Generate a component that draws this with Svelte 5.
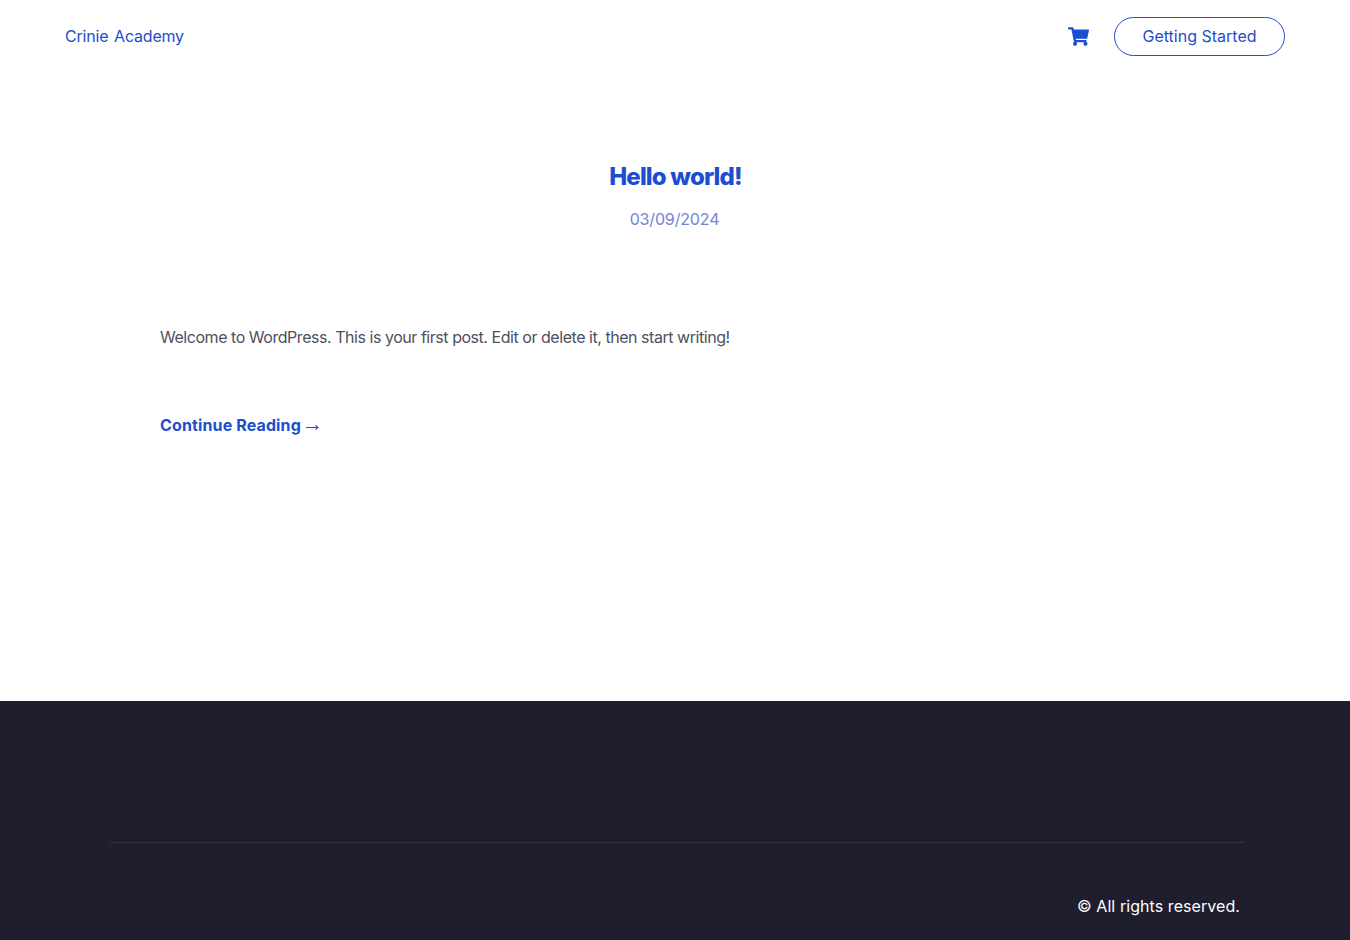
<script>
  let postDate = "03/09/2024";
</script>

<div class="page">
  <header class="header">
    <a class="brand" href="#top">Crinie Academy</a>
    <div class="actions">
      <a class="cart" href="#cart" aria-label="Cart">
        <svg viewBox="0 0 576 512" width="21" height="19" fill="currentColor">
          <path d="M528.12 301.32l47.27-208C578.81 78.3 567.39 64 552 64H159.21l-9.17-44.81C147.77 8.02 137.93 0 126.53 0H24C10.75 0 0 10.75 0 24v16c0 13.25 10.75 24 24 24h69.88l70.25 343.43C147.32 417.1 136 435.22 136 456c0 30.93 25.07 56 56 56s56-25.07 56-56c0-15.67-6.44-29.83-16.82-40h209.64C430.44 426.17 424 440.33 424 456c0 30.93 25.07 56 56 56s56-25.07 56-56c0-22.17-12.89-41.33-31.58-50.4l5.52-24.28c3.41-15.02-8-29.32-23.4-29.32H218.1l-6.55-32h293.16c11.2 0 20.91-7.75 23.41-18.68z" />
        </svg>
      </a>
      <a class="cta" href="#start">Getting Started</a>
    </div>
  </header>

  <main class="main">
    <div class="post-head">
      <h1>Hello world!</h1>
      <p class="date">{postDate}</p>
    </div>
    <p class="excerpt">Welcome to WordPress. This is your first post. Edit or delete it, then start writing!</p>
    <a class="more" href="#post">Continue Reading<span>→</span></a>
  </main>

  <footer class="footer">
    <div class="bottom">
      <p>© All rights reserved.</p>
    </div>
  </footer>
</div>

<style>
  :global(body) {
    margin: 0;
    background: #fff;
    font-family: Inter, "Liberation Sans", sans-serif;
  }
  .page {
    display: flex;
    flex-direction: column;
    height: 940px;
    overflow: hidden;
  }
  a {
    text-decoration: none;
    color: #1c4ecf;
  }
  .header {
    display: flex;
    justify-content: space-between;
    align-items: center;
    height: 39px;
    padding: 17px 65px 0;
    flex: none;
  }
  .brand {
    font-size: 16px;
    line-height: 24px;
    padding-bottom: 2px;
    letter-spacing: -0.2px;
    word-spacing: 1.5px;
  }
  .actions {
    display: flex;
    align-items: center;
    gap: 25px;
  }
  .cart {
    display: flex;
  }
  .cta {
    box-sizing: border-box;
    width: 171px;
    height: 39px;
    display: flex;
    align-items: center;
    justify-content: center;
    padding-bottom: 2px;
    border: 1px solid #1c4ecf;
    border-radius: 20px;
    font-size: 16px;
  }
  .main {
    flex: none;
    height: 645px;
    box-sizing: border-box;
    padding: 0 160px;
  }
  .post-head {
    text-align: center;
    padding-top: 105px;
  }
  h1 {
    margin: 0;
    padding-left: 1px;
    font-size: 24px;
    line-height: 32px;
    font-weight: 800;
    letter-spacing: -0.82px;
    color: #1c4ecf;
  }
  .date {
    margin: 14px 0 0;
    padding-right: 1px;
    font-size: 16px;
    line-height: 24px;
    letter-spacing: -0.15px;
    color: #7283d8;
  }
  .excerpt {
    margin: 94px 0 0;
    font-size: 16px;
    line-height: 24px;
    letter-spacing: -0.46px;
    color: #4f4f5f;
  }
  .more {
    display: inline-block;
    margin-top: 64px;
    font-size: 16px;
    line-height: 24px;
    font-weight: 700;
    letter-spacing: 0.13px;
  }
  .more span {
    margin-left: 1px;
    font-family: "Liberation Sans", sans-serif;
    font-size: 21px;
    line-height: 16px;
    font-weight: 400;
  }
  .footer {
    flex: 1;
    background: #1e1e2e;
    padding: 141px 105px 0 110px;
  }
  .bottom {
    border-top: 1px solid #33333f;
    padding-top: 51px;
    display: flex;
    justify-content: flex-end;
  }
  .bottom p {
    margin: 0;
    padding-right: 5px;
    font-size: 16px;
    line-height: 24px;
    letter-spacing: 0.07px;
    color: #fff;
  }
</style>
